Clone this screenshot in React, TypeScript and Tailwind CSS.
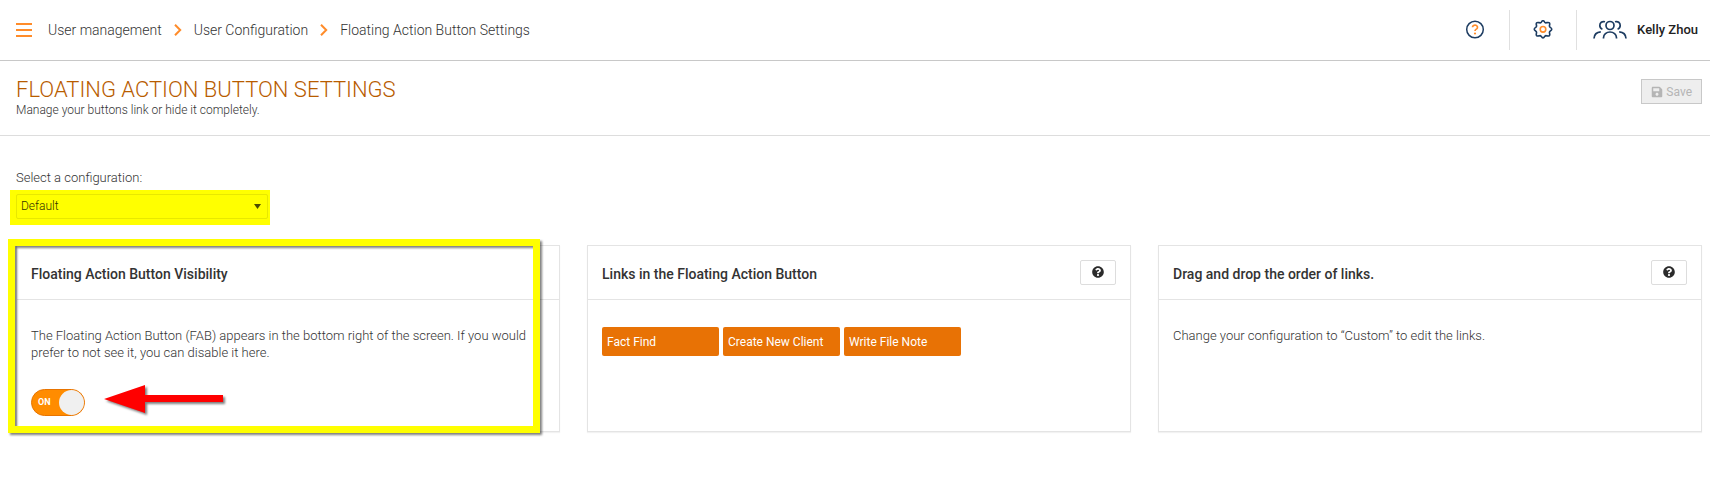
import React from "react";
import { FaQuestionCircle, FaSave } from "react-icons/fa";

function Chevron() {
  return (
    <svg aria-hidden="true" className="h-3 w-2" viewBox="0 0 8 12" fill="none" stroke="#ff8c2a" strokeWidth="2">
      <path d="M1 0.8L6.2 6L1 11.2" />
    </svg>
  );
}

function GearIcon() {
  return (
    <svg aria-hidden="true" className="size-5" viewBox="0 0 20 20" fill="none" strokeWidth="1.6" strokeLinejoin="round">
      <path
        stroke="#1d3c61"
        d="M8.3 2.2Q10-.8 11.7 2.2Q12.6 3.2 14 2.6Q17.400 1.800 16.600 5.100Q16.100 6.700 17.300 7.400Q20.200 9.200 17.300 11Q16.100 11.700 16.600 13.400Q17.400 16.700 14 15.900Q12.600 15.300 11.700 16.400Q10 19.400 8.300 16.400Q7.400 15.300 6 15.900Q2.600 16.700 3.400 13.400Q3.900 11.700 2.700 11Q-.2 9.200 2.700 7.400Q3.900 6.700 3.400 5.100Q2.600 1.800 6 2.600Q7.400 3.200 8.300 2.200z"
      />
      <circle cx="10" cy="9.3" r="2.8" stroke="#ff8c2a" />
    </svg>
  );
}

function HelpIcon() {
  return (
    <svg aria-hidden="true" className="size-5" viewBox="0 0 20 20" fill="none">
      <circle cx="10" cy="9.5" r="8.3" stroke="#1d3c61" strokeWidth="1.5" />
      <path d="M7.5 7.3a2.5 2.2 0 1 1 4.2 1.6c-1 .7-1.7 1-1.7 2.1" stroke="#ff8c2a" strokeWidth="1.7" />
      <circle cx="10" cy="13.5" r="1.1" fill="#ff8c2a" />
    </svg>
  );
}

function PeopleIcon() {
  return (
    <svg aria-hidden="true" className="h-5 w-[34px]" viewBox="0 0 34 20" fill="none" stroke="#1d3c61" strokeWidth="1.7">
      <circle cx="17" cy="5.5" r="4" />
      <path d="M10.5 18.5v-.8a6.5 5.7 0 0 1 13 0v.8" />
      <path d="M12 1.8c-3-1-5.2 1-5.2 3.6c0 1.800 1 3.200 2.600 3.800M22 1.800c3-1 5.200 1 5.200 3.600c0 1.800-1 3.200-2.600 3.800" />
      <path d="M1 18.500c.2-3.800 2.600-6.300 6.800-6.600M33 18.500c-.2-3.800-2.600-6.300-6.800-6.600" />
    </svg>
  );
}

function Card({ title, help, children }: { title: string; help?: boolean; children: React.ReactNode }) {
  return (
    <section className="flex min-h-[187px] flex-col border border-[#e4e4e4] shadow-[0_1px_1px_rgba(0,0,0,0.05)]">
      <div className="flex h-[54px] items-center justify-between border-b border-[#e4e4e4] px-3.5">
        <h2 className="pt-0.5 text-sm font-medium text-[#333]">{title}</h2>
        {help && (
          <button
            type="button"
            aria-label="Help"
            className="flex h-[25px] w-9 items-center justify-center rounded-xs border border-[#ddd] pb-0.5 text-xs text-[#2b2b2b]"
          >
            <FaQuestionCircle />
          </button>
        )}
      </div>
      <div className="px-3.5 pt-[27px]">{children}</div>
    </section>
  );
}

const links = ["Fact Find", "Create New Client", "Write File Note"];

export default function App() {
  const [on, setOn] = React.useState(true);
  return (
    <div className="bg-white font-['Roboto',sans-serif] text-[13px] font-light text-[#333]">
      <header className="flex h-[61px] items-center justify-between border-b border-[#c8c8c8] pl-4 pr-3">
        <nav aria-label="Breadcrumb" className="flex items-center gap-3 text-sm">
          <button type="button" aria-label="Menu" className="mr-1">
            <svg aria-hidden="true" className="h-3.5 w-4" viewBox="0 0 16 14" stroke="#ff8c2a" strokeWidth="2">
              <path d="M0 1h16M0 7h16M0 13h16" />
            </svg>
          </button>
          <a href="#users">User management</a>
          <Chevron />
          <a href="#configuration">User Configuration</a>
          <Chevron />
          <span>Floating Action Button Settings</span>
        </nav>
        <div className="flex items-center">
          <button type="button" aria-label="Help" className="mr-6">
            <HelpIcon />
          </button>
          <div className="flex h-10 items-center border-l border-[#e0e0e0] px-[23px]">
            <button type="button" aria-label="Settings">
              <GearIcon />
            </button>
          </div>
          <button type="button" className="flex h-10 items-center gap-2.5 border-l border-[#e0e0e0] pl-4 font-medium text-[#222]">
            <PeopleIcon />
            Kelly Zhou
          </button>
        </div>
      </header>

      <div className="flex h-[75px] items-start justify-between border-b border-[#ddd] pl-4 pr-2 pt-[17px]">
        <div>
          <h1 className="text-[22px] leading-6 font-light text-[#b85c00]">FLOATING ACTION BUTTON SETTINGS</h1>
          <p className="text-xs leading-4">Manage your buttons link or hide it completely.</p>
        </div>
        <button
          type="button"
          disabled
          className="mt-px flex h-[25px] items-center gap-[3px] border border-[#c8c8c8] bg-[#eee] px-[9px] text-xs font-normal text-[#b5b5b5]"
        >
          <FaSave className="size-3" />
          Save
        </button>
      </div>

      <main className="pb-6 pl-4 pr-2 pt-8">
        <label htmlFor="configuration" className="block leading-5">
          Select a configuration:
        </label>
        <div className="relative -ml-1.5 mt-0.5 flex h-[35px] w-[260px] items-start bg-[#ffff00] pl-1.5 pr-0.5 pt-1">
          <select
            id="configuration"
            className="h-[25px] w-full appearance-none rounded-xs border border-[#e8e800] px-1 pb-0.5 text-xs text-[#333300]"
          >
            <option>Default</option>
            <option>Custom</option>
          </select>
          <svg aria-hidden="true" className="pointer-events-none absolute right-[9px] top-3.5 h-[5px] w-[7px]" viewBox="0 0 7 5">
            <path d="M0 0h7L3.5 5z" fill="#4c4c00" />
          </svg>
        </div>

        <div className="mt-5 grid grid-cols-3 gap-[27px]">
          <div className="relative grid">
            <Card title="Floating Action Button Visibility">
              <p className="leading-[17px]">
                The Floating Action Button (FAB) appears in the bottom right of the screen. If you would prefer to not see it, you
                can disable it here.
              </p>
              <div className="mt-7 flex items-center gap-[19px]">
                <label className="relative flex h-[27px] w-[54px] cursor-pointer items-center rounded-full border border-[#e87400] bg-[#ff8c00] pl-1.5">
                  <input
                    type="checkbox"
                    role="switch"
                    aria-label="Floating Action Button visibility"
                    className="peer sr-only"
                    checked={on}
                    onChange={(e) => setOn(e.target.checked)}
                  />
                  <span className="text-[9px] font-bold text-white">{on ? "ON" : "OFF"}</span>
                  <span className="absolute left-0 size-[25px] rounded-full bg-[#f0f0f0] peer-checked:left-[27px]" />
                </label>
                <svg
                  aria-hidden="true"
                  className="-mb-1 -mt-3 h-8 w-[124px] drop-shadow-[2px_2px_1px_rgba(0,0,0,0.5)]"
                  viewBox="0 0 124 32"
                >
                  <path d="M0 16L41 2v10h78v7H41v11z" fill="#ff0000" />
                </svg>
              </div>
            </Card>
            <div className="pointer-events-none absolute -bottom-px -left-2 -top-1.5 right-5 border-7 border-[#ffff00] drop-shadow-[2px_2px_1px_rgba(0,0,0,0.5)]" />
          </div>
          <Card title="Links in the Floating Action Button" help>
            <ul className="flex flex-wrap gap-1">
              {links.map((l) => (
                <li key={l} className="flex h-[29px] w-[117px] items-center rounded-xs bg-[#e87205] px-[5px] text-xs font-normal text-white">
                  {l}
                </li>
              ))}
            </ul>
          </Card>
          <Card title="Drag and drop the order of links." help>
            <p className="leading-[17px]">Change your configuration to “Custom” to edit the links.</p>
          </Card>
        </div>
      </main>
    </div>
  );
}
